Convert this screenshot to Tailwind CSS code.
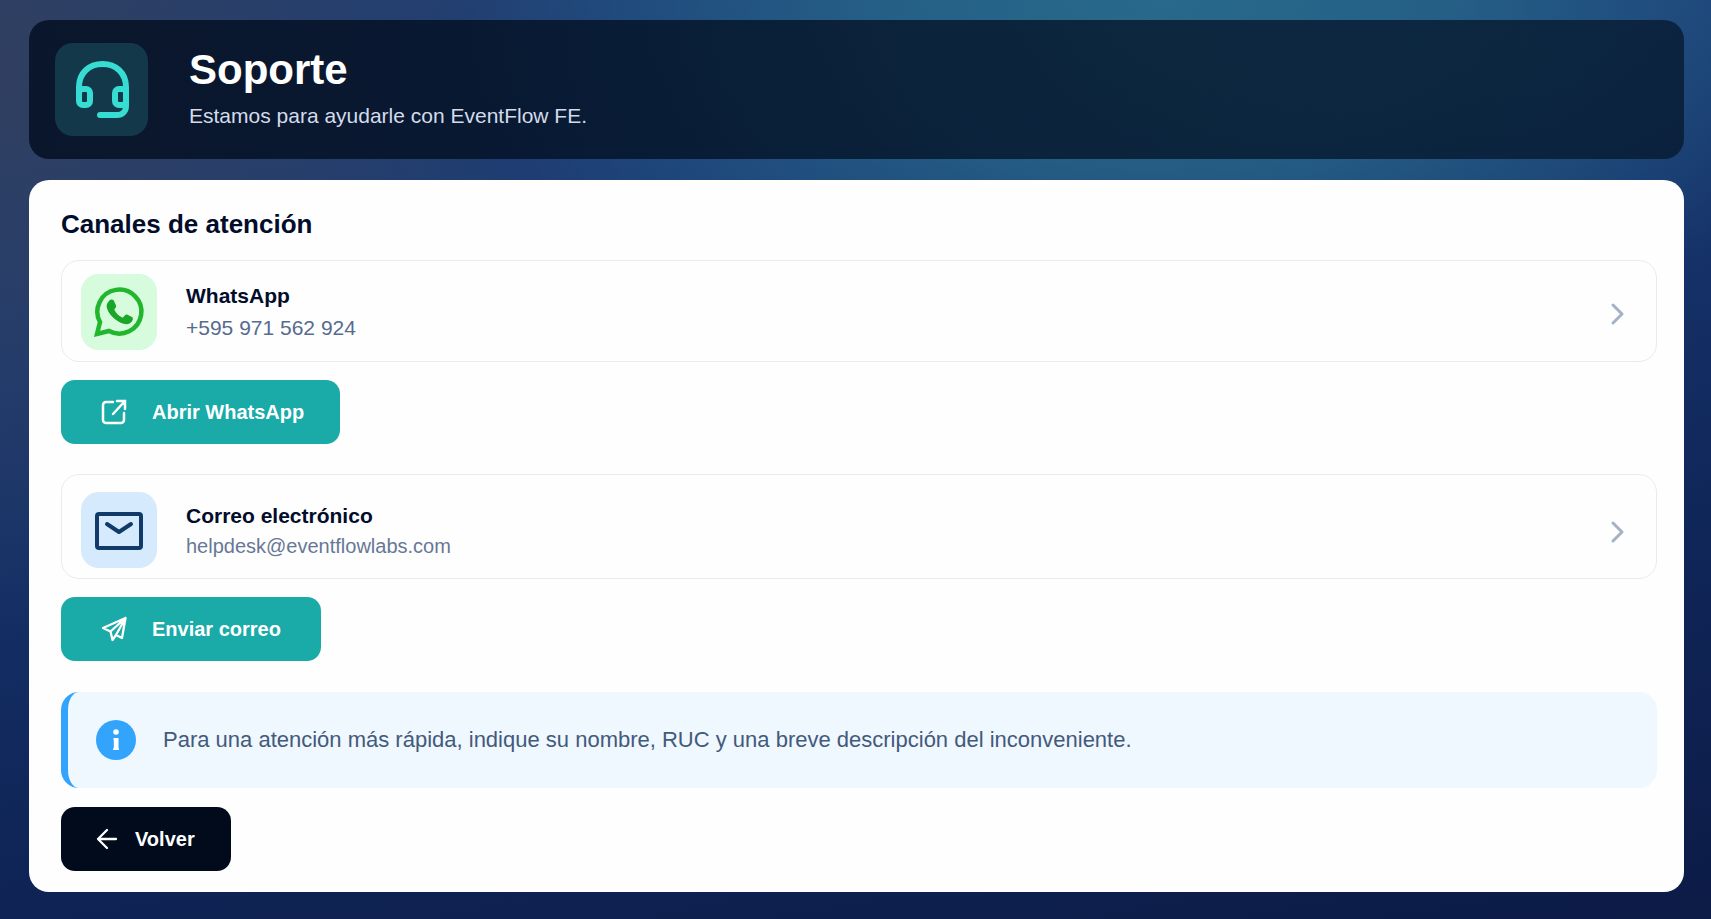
<!DOCTYPE html>
<html lang="es">
<head>
    <meta charset="UTF-8">
    <meta name="viewport" content="width=device-width, initial-scale=1.0">
    <title>Soporte - EventFlow FE</title>
    <script src="https://cdn.jsdelivr.net/npm/@tailwindcss/browser@4"></script>
    <style>
        body {
            font-family: "Liberation Sans", Arial, sans-serif;
            background:
                radial-gradient(ellipse 700px 400px at 68% 0%, #286a8b 0%, rgba(40, 106, 139, 0.75) 40%, rgba(40, 106, 139, 0) 100%),
                radial-gradient(ellipse 650px 560px at 0% 8%, #303f60 0%, rgba(48, 63, 96, 0) 100%),
                linear-gradient(170deg, #1e4078 0%, #1b3c76 25%, #10275a 65%, #0c1b46 100%);
        }
    </style>
</head>
<body class="min-h-screen pt-5 pr-[27px] pb-7 pl-[29px] text-[#020c2b]">
    <header class="flex items-center gap-[41px] rounded-[20px] bg-linear-to-r from-[#020d1f]/82 to-[#05162b]/74 px-[26px] py-[23px]">
        <div class="flex size-[93px] shrink-0 items-center justify-center rounded-[18px] bg-[#13384a]">
            <svg class="size-[66px] text-[#37dcd2]" viewBox="0 0 66 66" fill="none" stroke="currentColor" stroke-width="6" stroke-linecap="round" stroke-linejoin="round">
                <path d="M10 40V30C10 16 20 7 33.500 7S57 16 57 30v19c0 5.500-4 9-9 9H31" />
                <rect x="10" y="32" width="11" height="16" rx="4" />
                <rect x="46" y="32" width="11" height="16" rx="4" />
            </svg>
        </div>
        <div class="pb-1">
            <h1 class="text-[42px] leading-[48px] font-bold text-white">Soporte</h1>
            <p class="mt-2 text-[21px] leading-7 text-[#d3dcea]">Estamos para ayudarle con EventFlow FE.</p>
        </div>
    </header>

    <main class="mt-[21px] rounded-[20px] bg-[#fefefe] pt-6 pr-[27px] pb-[21px] pl-8">
        <h2 class="text-[26px] leading-10 font-bold">Canales de atención</h2>

        <section>
            <a href="https://wa.me/595971562924" class="mt-4 flex items-center rounded-[18px] border border-[#e9ebf2] pt-[13px] pr-[30px] pb-[11px] pl-[19px]">
                <span class="flex size-[76px] shrink-0 items-center justify-center rounded-[18px] bg-[#d6fbdd]">
                    <svg class="size-[50px] overflow-visible" viewBox="0 0 50 50" fill="none">
                        <path d="M3 47 6 35A22 22 0 1 1 15 44Z" stroke="#22b52e" stroke-width="4.500" />
                        <path d="M15 14c1.500-2 4-2 5 0l2 4.500c.5 1.500-.5 2.500-1.800 4 2 4 4.500 6.500 8.500 8.300l2.300-2.500c.7-.8 1.500-1 2.500-.5l4.500 2.300c1 .5 1 1.500.7 2.600-1 3.500-4.700 5-8.200 4.300C21.500 35 13.500 26 12.700 20c-.3-2.500.8-4.500 2.300-6Z" fill="#1ba627" />
                    </svg>
                </span>
                <span class="ml-[29px] flex flex-1 flex-col text-[21px]">
                    <strong class="leading-8">WhatsApp</strong>
                    <span class="leading-8 text-[#566b8f]">+595 971 562 924</span>
                </span>
                <svg class="mt-1 h-6 w-4 text-[#a5b1c5]" viewBox="0 0 16 24" fill="none" stroke="currentColor" stroke-width="3" stroke-linecap="round" stroke-linejoin="round">
                    <path d="m3 3 9 9-9 9" />
                </svg>
            </a>
            <button type="button" class="mt-[18px] flex h-16 items-center rounded-[14px] bg-[#1aaaa8] pr-9 pl-[39px] text-xl font-bold text-white">
                <svg class="mr-6 size-7" viewBox="0 0 28 28" fill="none" stroke="currentColor" stroke-width="2.500" stroke-linecap="round">
                    <path d="M13 4H6a3 3 0 0 0-3 3v15a3 3 0 0 0 3 3h15a3 3 0 0 0 3-3v-7M17 3h8v8M25 3 13 16" />
                </svg>
                Abrir WhatsApp
            </button>
        </section>

        <section class="mt-[30px]">
            <a href="mailto:helpdesk@eventflowlabs.com" class="flex items-center rounded-[18px] border border-[#e9ebf2] pt-[17px] pr-[30px] pb-[10px] pl-[19px]">
                <span class="flex size-[76px] shrink-0 items-center justify-center rounded-[18px] bg-[#d5eafd]">
                    <svg class="size-12" viewBox="0 0 48 48" fill="none" stroke="#123a69" stroke-width="4" stroke-linecap="round" stroke-linejoin="round">
                        <rect x="2" y="8" width="44" height="34" rx="2" />
                        <path d="m12 18 12 8 12-8" />
                    </svg>
                </span>
                <span class="ml-[29px] flex flex-1 flex-col">
                    <strong class="text-[21px] leading-8">Correo electrónico</strong>
                    <span class="text-xl leading-7 text-[#667896]">helpdesk@eventflowlabs.com</span>
                </span>
                <svg class="mt-1 h-6 w-4 text-[#a5b1c5]" viewBox="0 0 16 24" fill="none" stroke="currentColor" stroke-width="3" stroke-linecap="round" stroke-linejoin="round">
                    <path d="m3 3 9 9-9 9" />
                </svg>
            </a>
            <button type="button" class="mt-[18px] flex h-16 items-center rounded-[14px] bg-[#1aaaa8] pr-10 pl-[39px] text-xl font-bold text-white">
                <svg class="mr-6 size-7" viewBox="0 0 28 28" fill="none" stroke="currentColor" stroke-width="2.300" stroke-linecap="round" stroke-linejoin="round">
                    <path d="M25.500 3 3 13l7.500 3.500 2 8.500 3.500-5 6 3ZM25.500 3l-15 13.500M25.500 3 16 20" />
                </svg>
                Enviar correo
            </button>
        </section>

        <div class="mt-[31px] flex h-24 items-center gap-[27px] rounded-[18px] border-l-[7px] border-[#33a4fb] bg-[#eff7ff] pl-7">
            <svg class="size-10 shrink-0" viewBox="0 0 40 40">
                <circle cx="20" cy="20" r="20" fill="#33a4fb" />
                <circle cx="20" cy="12" r="2.800" fill="#fff" />
                <path d="M17.500 18h5v10.500h.5V30h-6v-1.500h.8V20h-.3Z" fill="#fff" />
            </svg>
            <p class="text-[22px] leading-7 text-[#435a7b]">Para una atención más rápida, indique su nombre, RUC y una breve descripción del inconveniente.</p>
        </div>

        <button type="button" class="mt-[19px] flex h-16 items-center rounded-[14px] bg-[#010b1c] pr-9 pl-[34px] text-xl font-bold text-white">
            <svg class="mr-4 size-6" viewBox="0 0 24 24" fill="none" stroke="currentColor" stroke-width="2.300" stroke-linecap="round" stroke-linejoin="round">
                <path d="M21 12H3M12 3l-9 9 9 9" />
            </svg>
            Volver
        </button>
    </main>
</body>
</html>
